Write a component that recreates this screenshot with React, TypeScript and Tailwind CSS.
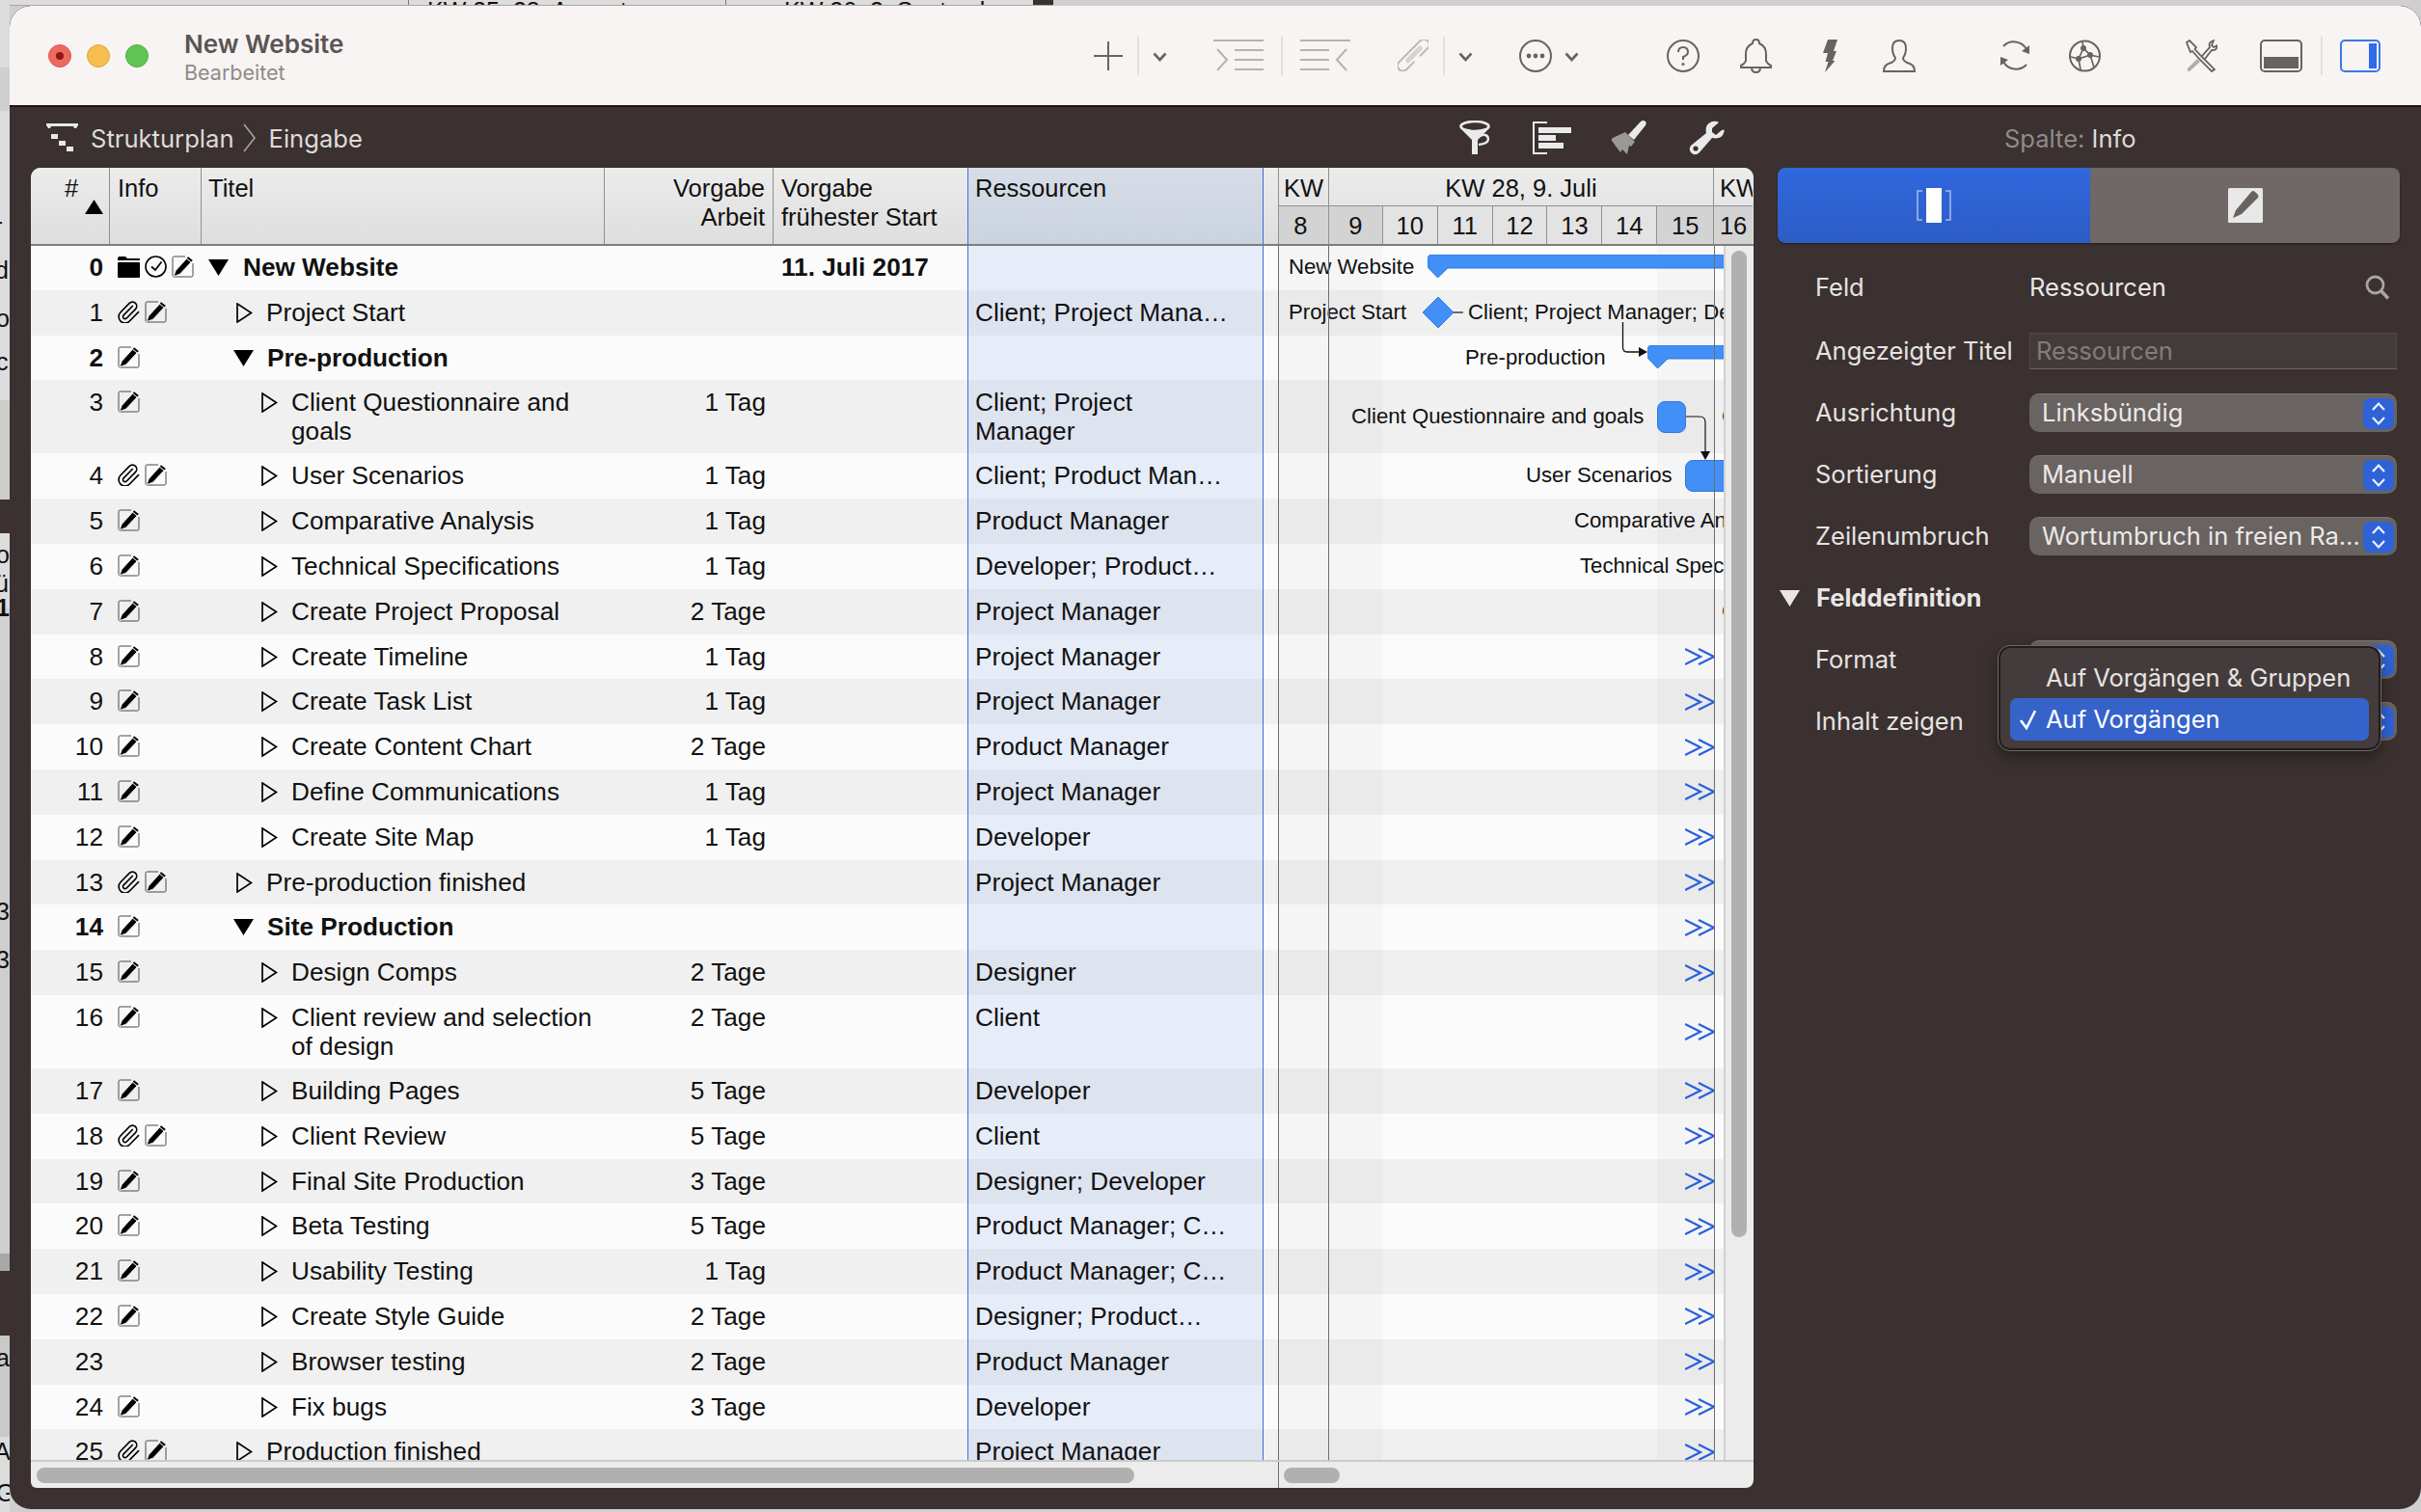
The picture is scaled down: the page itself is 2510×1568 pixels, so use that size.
const SANS = "font-['Liberation_Sans',Arial,sans-serif]";
const UI = "font-['Inter',sans-serif]";

type RowData = {
  n: number;
  icons: string;
  title: string;
  kind: "root" | "group" | "task1" | "task2";
  work?: string;
  start?: string;
  res?: string;
  tall?: boolean;
  more?: boolean;
};

const PM = "Project Manager";
const rows: RowData[] = [
  { n: 0, icons: "fcn", title: "New Website", kind: "root", start: "11. Juli 2017" },
  { n: 1, icons: "pn", title: "Project Start", kind: "task1", res: "Client; Project Mana…" },
  { n: 2, icons: "n", title: "Pre-production", kind: "group" },
  { n: 3, icons: "n", title: "Client Questionnaire and goals", kind: "task2", work: "1 Tag", res: "Client; Project Manager", tall: true },
  { n: 4, icons: "pn", title: "User Scenarios", kind: "task2", work: "1 Tag", res: "Client; Product Man…" },
  { n: 5, icons: "n", title: "Comparative Analysis", kind: "task2", work: "1 Tag", res: "Product Manager" },
  { n: 6, icons: "n", title: "Technical Specifications", kind: "task2", work: "1 Tag", res: "Developer; Product…" },
  { n: 7, icons: "n", title: "Create Project Proposal", kind: "task2", work: "2 Tage", res: PM },
  { n: 8, icons: "n", title: "Create Timeline", kind: "task2", work: "1 Tag", res: PM, more: true },
  { n: 9, icons: "n", title: "Create Task List", kind: "task2", work: "1 Tag", res: PM, more: true },
  { n: 10, icons: "n", title: "Create Content Chart", kind: "task2", work: "2 Tage", res: "Product Manager", more: true },
  { n: 11, icons: "n", title: "Define Communications", kind: "task2", work: "1 Tag", res: PM, more: true },
  { n: 12, icons: "n", title: "Create Site Map", kind: "task2", work: "1 Tag", res: "Developer", more: true },
  { n: 13, icons: "pn", title: "Pre-production finished", kind: "task1", res: PM, more: true },
  { n: 14, icons: "n", title: "Site Production", kind: "group", more: true },
  { n: 15, icons: "n", title: "Design Comps", kind: "task2", work: "2 Tage", res: "Designer", more: true },
  { n: 16, icons: "n", title: "Client review and selection of design", kind: "task2", work: "2 Tage", res: "Client", tall: true, more: true },
  { n: 17, icons: "n", title: "Building Pages", kind: "task2", work: "5 Tage", res: "Developer", more: true },
  { n: 18, icons: "pn", title: "Client Review", kind: "task2", work: "5 Tage", res: "Client", more: true },
  { n: 19, icons: "n", title: "Final Site Production", kind: "task2", work: "3 Tage", res: "Designer; Developer", more: true },
  { n: 20, icons: "n", title: "Beta Testing", kind: "task2", work: "5 Tage", res: "Product Manager; C…", more: true },
  { n: 21, icons: "n", title: "Usability Testing", kind: "task2", work: "1 Tag", res: "Product Manager; C…", more: true },
  { n: 22, icons: "n", title: "Create Style Guide", kind: "task2", work: "2 Tage", res: "Designer; Product…", more: true },
  { n: 23, icons: "", title: "Browser testing", kind: "task2", work: "2 Tage", res: "Product Manager", more: true },
  { n: 24, icons: "n", title: "Fix bugs", kind: "task2", work: "3 Tage", res: "Developer", more: true },
  { n: 25, icons: "pn", title: "Production finished", kind: "task1", res: PM, more: true },
];

const days = [
  { d: 8, cls: "w-[52px] pr-[6px] bg-[#d3d3d3]" },
  { d: 9, cls: "w-[56px] bg-[#d3d3d3]" },
  { d: 10, cls: "w-[57px] bg-[#e3e3e3]" },
  { d: 11, cls: "w-[57px] bg-[#e3e3e3]" },
  { d: 12, cls: "w-[57px] bg-[#e3e3e3]" },
  { d: 13, cls: "w-[57px] bg-[#e3e3e3]" },
  { d: 14, cls: "w-[57px] bg-[#e3e3e3]" },
  { d: 15, cls: "w-[59px] bg-[#d3d3d3]" },
  { d: 16, cls: "w-[40px] bg-[#d3d3d3]" },
];

// info column glyphs
const NoteIcon = () => (
  <svg width="23" height="23" viewBox="0 0 23 23" className="shrink-0">
    <path d="M14 1H2.5Q1 1 1 2.5V20.5Q1 22 2.5 22H20.5Q22 22 22 20.5V8" fill="none" stroke="#333" strokeWidth="0.9" />
    <path d="M2 21.5L4.3 15.5L15.5 3.2L20 7L8.5 19.2Z" fill="#000" stroke="#fbfbfb" strokeWidth="0.8" />
    <path d="M17 1.2L21.8 5L20.4 6.6L15.8 2.8Z" fill="#000" />
  </svg>
);
const ClipIcon = () => (
  <svg width="23" height="23" viewBox="2 1 21 21" className="shrink-0">
    <path d="m16 6-8.414 8.586a2 2 0 0 0 2.829 2.829l8.414-8.586a4 4 0 1 0-5.657-5.657l-8.379 8.551a6 6 0 1 0 8.485 8.485l8.379-8.551" fill="none" stroke="#000" strokeWidth="1.5" strokeLinecap="round" />
  </svg>
);
const FolderIcon = () => (
  <svg width="23" height="23" viewBox="0 0 23 23" className="shrink-0">
    <path d="M0 3Q0 1 2 1H8L10 3H22Q23 3 23 4V5H0Z" fill="#000" />
    <rect x="0" y="7" width="23" height="16" rx="1" fill="#000" />
  </svg>
);
const ClockIcon = () => (
  <svg width="23" height="23" viewBox="0 0 23 23" className="shrink-0">
    <circle cx="11.5" cy="11.5" r="10.5" fill="none" stroke="#000" strokeWidth="1.6" />
    <path d="M7 11.5L11 15L17.5 6.5" fill="none" stroke="#000" strokeWidth="1.8" />
  </svg>
);
const InfoIcons = ({ s }: { s: string }) => (
  <div className="flex gap-[5px] pt-[11px] pl-[8px]">
    {s.split("").map((c, i) =>
      c === "f" ? <FolderIcon key={i} /> : c === "c" ? <ClockIcon key={i} /> : c === "p" ? <ClipIcon key={i} /> : <NoteIcon key={i} />
    )}
  </div>
);

const TriDown = ({ cls, fill = "#000" }: { cls: string; fill?: string }) => (
  <svg width="21" height="17" viewBox="0 0 21 17" className={cls}>
    <path d="M0 0H21L10.5 17Z" fill={fill} />
  </svg>
);
const TriRight = ({ cls }: { cls: string }) => (
  <svg width="17" height="21" viewBox="0 0 17 21" className={cls}>
    <path d="M1 1L15.5 10.5L1 20Z" fill="none" stroke="#000" strokeWidth="1.7" />
  </svg>
);

const More = () => (
  <svg width="31" height="18" viewBox="0 0 31 18" className="absolute left-[422px] top-1/2 -translate-y-1/2">
    <path d="M0 1L16 9L0 17M14 1L30 9L14 17" fill="none" stroke="#2b63e2" strokeWidth="2.2" />
  </svg>
);

const TitleCell = ({ r }: { r: RowData }) => {
  const bold = r.kind === "root" || r.kind === "group";
  return (
    <div className="w-[418px] shrink-0 flex">
      {r.kind === "root" && <TriDown cls="shrink-0 ml-[7px] mr-[15px] mt-[15px]" />}
      {r.kind === "group" && <TriDown cls="shrink-0 ml-[33px] mr-[14px] mt-[15px]" />}
      {r.kind === "task1" && <TriRight cls="shrink-0 ml-[36px] mr-[14px] mt-[13px]" />}
      {r.kind === "task2" && <TriRight cls="shrink-0 ml-[62px] mr-[14px] mt-[13px]" />}
      <div className={`pt-[8px] pr-[8px] ${bold ? "font-bold" : ""}`}>{r.title}</div>
    </div>
  );
};

const TableRow = ({ r, i }: { r: RowData; i: number }) => {
  const odd = i % 2 === 1;
  const bold = r.kind === "root" || r.kind === "group";
  return (
    <div className={`flex shrink-0 text-[26.2px] ${r.tall ? "h-[76px]" : "h-[46.8px]"} ${odd ? "bg-[#f0f0f0]" : "bg-[#fbfbfb]"}`}>
      <div className={`w-[82px] shrink-0 pt-[8px] pr-[7px] text-right ${bold ? "font-bold" : ""}`}>{r.n}</div>
      <div className="w-[95px] shrink-0"><InfoIcons s={r.icons} /></div>
      <TitleCell r={r} />
      <div className="w-[175px] shrink-0 pt-[8px] pr-[8px] text-right">{r.work}</div>
      <div className="w-[201px] shrink-0 pt-[8px] pl-[8px] font-bold">{r.start}</div>
      <div className={`w-[307px] shrink-0 pt-[8px] pl-[7px] pr-[60px] border-x border-[#3f6fd8] ${odd ? "bg-[#dde3ef]" : "bg-[#e6ecf8]"}`}>
        <div className={r.tall ? "" : "whitespace-nowrap"}>{r.res}</div>
      </div>
      <div className="w-[15px] shrink-0" />
      <div className="flex-1 relative">{r.more && <More />}</div>
    </div>
  );
};

// gantt labels and bars, placed on the time axis
const GanttCanvas = () => (
  <div className={`absolute left-[1293px] top-0 w-[462px] h-[1260px] overflow-hidden ${SANS} text-[22.2px] leading-[30px] text-[#111]`}>
    <div className="absolute left-0 top-0 w-[108px] h-full bg-black/[0.025]" />
    <div className="absolute left-[393px] top-0 w-[59px] h-full bg-black/[0.025]" />
    <div className="absolute left-[11px] top-[8px]">New Website</div>
    <svg width="310" height="24" className="absolute left-[155px] top-[10px]">
      <path d="M5 0H310V14H21L10.5 24L1 14Q0 13 0 10V5Q0 0 5 0Z" fill="#418ff7" stroke="#3277dc" strokeWidth="1" />
    </svg>
    <div className="absolute left-[11px] top-[55px]">Project Start</div>
    <svg width="44" height="34" className="absolute left-[149px] top-[53px]">
      <path d="M17 1L33 17L17 33L1 17Z" fill="#418ff7" stroke="#3277dc" strokeWidth="1" />
      <path d="M33 17H43" stroke="#111" strokeWidth="1.2" />
    </svg>
    <div className="absolute left-[197px] top-[55px] whitespace-nowrap">Client; Project Manager; Designer</div>
    <div className="absolute left-[194px] top-[102px]">Pre-production</div>
    <svg width="30" height="38" className="absolute left-[356px] top-[79px]">
      <path d="M1.5 1V27Q1.5 32 6 32H18" fill="none" stroke="#111" strokeWidth="1.3" />
      <path d="M18 27L27 32L18 37Z" fill="#111" />
    </svg>
    <svg width="90" height="24" className="absolute left-[383px] top-[104px]">
      <path d="M5 0H90V14H21L10.5 24L1 14Q0 13 0 10V5Q0 0 5 0Z" fill="#418ff7" stroke="#3277dc" strokeWidth="1" />
    </svg>
    <div className="absolute left-[76px] top-[163px] whitespace-nowrap">Client Questionnaire and goals</div>
    <div className="absolute left-[393px] top-[162px] w-[30px] h-[33px] rounded-[8px] bg-[#418ff7] border border-[#3277dc]" />
    <svg width="28" height="50" className="absolute left-[423px] top-[177px]">
      <path d="M0 1H14Q20 1 20 7V40" fill="none" stroke="#111" strokeWidth="1.2" />
      <path d="M15 37H25L20 46Z" fill="#111" />
    </svg>
    <div className="absolute left-[460px] top-[163px]">C</div>
    <div className="absolute left-[257px] top-[224px] whitespace-nowrap">User Scenarios</div>
    <div className="absolute left-[422px] top-[223px] w-[80px] h-[33px] rounded-[8px] bg-[#418ff7] border border-[#3277dc]" />
    <div className="absolute left-[307px] top-[271px] whitespace-nowrap">Comparative Analysis</div>
    <div className="absolute left-[313px] top-[318px] whitespace-nowrap">Technical Specifications</div>
    <div className="absolute left-[460px] top-[365px]">C</div>
  </div>
);

const HeaderCell = ({ cls, children }: { cls: string; children?: React.ReactNode }) => (
  <div className={`shrink-0 h-full border-r border-[#909090] pt-[6px] ${cls}`}>{children}</div>
);

const TableHeader = () => (
  <div className="relative z-10 flex h-[80px] shrink-0 border-b border-[#7d7d7d] shadow-[0_1px_0_#7d7d7d] bg-gradient-to-b from-[#ececec] to-[#dedede]">
    <HeaderCell cls="w-[82px] relative pl-[35px]">
      #
      <svg width="19" height="15" className="absolute left-[56px] top-[33px]"><path d="M9.5 0L19 15H0Z" fill="#000" /></svg>
    </HeaderCell>
    <HeaderCell cls="w-[95px] pl-[8px]">Info</HeaderCell>
    <HeaderCell cls="w-[418px] pl-[7px]">Titel</HeaderCell>
    <HeaderCell cls="w-[175px] pr-[8px] text-right">Vorgabe<br />Arbeit</HeaderCell>
    <div className="w-[201px] shrink-0 pt-[6px] pl-[8px]">Vorgabe<br />frühester Start</div>
    <div className="w-[307px] shrink-0 pt-[6px] pl-[7px] border-x border-[#3f6fd8] bg-gradient-to-b from-[#d6dde8] to-[#cbd3df]">Ressourcen</div>
    <div className="w-[15px] shrink-0" />
    <div className="flex flex-col w-[492px] shrink-0 border-l border-[#909090] text-center">
      <div className="flex h-[40px] shrink-0 border-b border-[#909090]">
        <div className="w-[52px] border-r border-[#909090] pt-[6px]">KW</div>
        <div className="w-[400px] border-r border-[#909090] pt-[6px]">KW 28, 9. Juli</div>
        <div className="w-[40px] pt-[6px] pl-[6px] overflow-hidden text-left">KW</div>
      </div>
      <div className="flex flex-1">
        {days.map((d) => (
          <div key={d.d} className={`${d.cls} border-r border-[#909090] last:border-r-0 flex items-center justify-center`}>{d.d}</div>
        ))}
      </div>
    </div>
  </div>
);

const GanttTable = () => (
  <div className={`w-[1786px] h-[1369px] shrink-0 flex flex-col rounded-t-[10px] rounded-bl-[6px] rounded-br-[8px] overflow-hidden bg-[#ececec] text-[#111] ${SANS} text-[25.5px] leading-[30px]`}>
    <TableHeader />
    <div className="flex h-[1260px] shrink-0">
      <div className="relative w-[1755px] shrink-0 overflow-hidden flex flex-col">
        {rows.map((r, i) => <TableRow key={r.n} r={r} i={i} />)}
        <GanttCanvas />
        <div className="absolute left-[1293px] top-0 w-px h-full bg-[#6e6e6e]" />
        <div className="absolute left-[1345px] top-0 w-px h-full bg-[#6e6e6e]" />
        <div className="absolute left-[1745px] top-0 w-px h-full bg-[#6e6e6e]" />
      </div>
      <div className="flex-1 border-l-2 border-[#d0d0d0] pt-[6px] pl-[6px]">
        <div className="w-[16px] h-[1023px] rounded-full bg-[#b0b0b0]" />
      </div>
    </div>
    <div className="flex h-[29px] shrink-0 border-t-2 border-[#cbcbcb]">
      <div className="w-[1293px] shrink-0 pt-[6px] pl-[6px]">
        <div className="w-[1138px] h-[16px] rounded-full bg-[#b0b0b0]" />
      </div>
      <div className="flex-1 border-l border-[#6e6e6e] pt-[6px] pl-[5px]">
        <div className="w-[58px] h-[16px] rounded-full bg-[#b0b0b0]" />
      </div>
    </div>
  </div>
);

// toolbar icons
const DK = "#69635f";
const LT = "#b6b2b0";

const Sep = ({ cls }: { cls: string }) => <div className={`w-[2px] h-[40px] bg-[#e3e0de] shrink-0 ${cls}`} />;
const Chev = ({ cls }: { cls: string }) => (
  <svg width="15" height="10" viewBox="0 0 15 10" className={`shrink-0 mt-[3px] ${cls}`}>
    <path d="M1.5 1.5L7.5 8L13.5 1.5" fill="none" stroke={DK} strokeWidth="2.6" />
  </svg>
);

const Toolbar = () => (
  <div className="flex items-center">
    <svg width="30" height="30" className="shrink-0"><path d="M15 0V30M0 15H30" stroke={DK} strokeWidth="2" /></svg>
    <Sep cls="ml-[15px]" />
    <Chev cls="ml-[14px]" />
    <svg width="52" height="34" className="shrink-0 ml-[48px]">
      <path d="M0 1H52M22 11H52M22 21H52M22 31H52" stroke={LT} strokeWidth="2" />
      <path d="M4 10L14 21L4 32" fill="none" stroke={LT} strokeWidth="2" />
    </svg>
    <Sep cls="ml-[18px]" />
    <svg width="52" height="34" className="shrink-0 ml-[18px]">
      <path d="M0 1H52M0 11H30M0 21H30M0 31H30" stroke={LT} strokeWidth="2" />
      <path d="M48 10L38 21L48 32" fill="none" stroke={LT} strokeWidth="2" />
    </svg>
    <svg width="32" height="33" viewBox="0 0 32 33" className="shrink-0 ml-[49px]">
      <g transform="rotate(45 16 16.5)">
        <path d="M21.5 20V31.5A5.5 5.5 0 0 1 10.5 31.5V0.5A5.5 5.5 0 0 1 21.5 0.5V12" fill="none" stroke="#bdb9b7" strokeWidth="2" />
        <path d="M16 6V24" stroke="#d6d3d1" strokeWidth="5" strokeLinecap="round" />
      </g>
    </svg>
    <Sep cls="ml-[15px]" />
    <Chev cls="ml-[14px]" />
    <svg width="34" height="34" className="shrink-0 ml-[48px]">
      <circle cx="17" cy="17" r="16" fill="none" stroke={DK} strokeWidth="2" />
      <circle cx="10" cy="17" r="2.4" fill={DK} /><circle cx="17" cy="17" r="2.4" fill={DK} /><circle cx="24" cy="17" r="2.4" fill={DK} />
    </svg>
    <Chev cls="ml-[13px]" />
    <svg width="34" height="34" className={`shrink-0 ml-[91px]`}>
      <circle cx="17" cy="17" r="16" fill="none" stroke={DK} strokeWidth="2" />
      <path d="M12 13Q12 8 17 8Q22 8 22 13Q22 16 17 18V21" fill="none" stroke={DK} strokeWidth="2" />
      <circle cx="17" cy="25.5" r="1.6" fill={DK} />
    </svg>
    <svg width="33" height="36" className="shrink-0 ml-[42px]">
      <path d="M16.5 1Q20 1 20 5Q27 8 27 16V23Q28 26 32 28V30H1V28Q5 26 6 23V16Q6 8 13 5Q13 1 16.5 1Z" fill="none" stroke={DK} strokeWidth="2" />
      <path d="M12 30Q12 35 16.5 35Q21 35 21 30" fill="none" stroke={DK} strokeWidth="2" />
    </svg>
    <svg width="16" height="34" className="shrink-0 ml-[52px]">
      <path d="M6 0H16L12 12H15L11 22H13.5L3 34L6.5 23H3.5L6 14H1Z" fill={DK} />
    </svg>
    <svg width="34" height="34" className="shrink-0 ml-[47px]">
      <path d="M17 1Q24 1 24 9Q24 15 21 19Q21 23 28 25Q33 27 33 33H1Q1 27 6 25Q13 23 13 19Q10 15 10 9Q10 1 17 1Z" fill="none" stroke={DK} strokeWidth="2" />
    </svg>
    <svg width="34" height="35" className="shrink-0 ml-[86px]">
      <path d="M29 11A15 15 0 0 0 5 8" fill="none" stroke={DK} strokeWidth="2" />
      <path d="M5 24A15 15 0 0 0 29 27" fill="none" stroke={DK} strokeWidth="2" />
      <path d="M32 7V16L24 13Z" fill={DK} />
      <path d="M2 28V19L10 22Z" fill={DK} />
    </svg>
    <svg width="33" height="34" className="shrink-0 ml-[39px]">
      <circle cx="16.5" cy="17" r="15.5" fill="none" stroke={DK} strokeWidth="2" />
      <path d="M15 9L10 20L22 16ZM15 9L14 2M10 20L2 18M10 20L12 31M22 16L31 18M22 16L26 29" fill="none" stroke={DK} strokeWidth="1.7" />
      <circle cx="15" cy="9" r="3" fill={DK} /><circle cx="10" cy="20" r="3" fill={DK} /><circle cx="22" cy="16" r="3" fill={DK} />
    </svg>
    <svg width="34" height="34" className="shrink-0 ml-[87px]">
      <path d="M2 3L5 1L12 8L10.5 10L18 18L31 31L28 33L15 20L8 12L6 13Z" fill="none" stroke={DK} strokeWidth="1.8" />
      <path d="M18 17L26 8Q24 3 30 1L28 6L30 8L34 6Q33 12 28 11L21 20" fill="none" stroke={DK} strokeWidth="1.8" />
      <path d="M13 20L3 30Q2 33 5 33L16 23Z" fill="#b0acaa" />
    </svg>
    <div className="w-[44px] h-[34px] ml-[44px] rounded-[5px] border-2 border-[#69635f] flex flex-col justify-end shrink-0 p-[2px]">
      <div className="h-[12px] bg-[#69635f]" />
    </div>
    <Sep cls="ml-[19px]" />
    <div className="w-[42px] h-[34px] ml-[18px] rounded-[5px] border-2 border-[#3a78ee] flex justify-end shrink-0 p-[2px]">
      <div className="w-[8px] bg-[#2f6bea]" />
    </div>
  </div>
);

const TitleBar = () => (
  <div className="flex items-center h-[105px] shrink-0 bg-[#f7f4f3] border-b-2 border-[#1c1615] pl-[40px] rounded-t-[22px]">
    <div className="w-[24px] h-[24px] rounded-full bg-[#ee6a5f] border border-[#d85a50] flex items-center justify-center">
      <div className="w-[8px] h-[8px] rounded-full bg-[#8c1a10]" />
    </div>
    <div className="w-[24px] h-[24px] ml-[16px] rounded-full bg-[#f5be4f] border border-[#dfa63d]" />
    <div className="w-[24px] h-[24px] ml-[16px] rounded-full bg-[#61c554] border border-[#52ac46]" />
    <div className={`w-[943px] ml-[37px] mt-[4px] shrink-0 ${UI}`}>
      <div className="text-[26px] leading-[30px] font-semibold text-[#5a5552]">New Website</div>
      <div className="text-[21.5px] leading-[26px] text-[#8f8b88] mt-[1px]">Bearbeitet</div>
    </div>
    <Toolbar />
  </div>
);

const SubBar = () => (
  <div className={`flex items-center h-[63px] shrink-0 ${UI} text-[#dedbd9]`}>
    <div className="flex items-center w-[1808px] shrink-0 pl-[38px]">
      <div className="flex items-center w-[1465px] shrink-0">
        <svg width="33" height="29" viewBox="0 0 33 29" className="shrink-0">
          <path d="M0 0H33V2L31 5H29L28 3H5L4 5H2L0 2Z" fill="#e8e8e8" />
          <rect x="5" y="11" width="7" height="5" fill="#e8e8e8" /><rect x="13" y="18" width="7" height="5" fill="#e8e8e8" /><rect x="21" y="24" width="7" height="5" fill="#e8e8e8" />
        </svg>
        <span className="ml-[13px] pt-[2px] text-[25.6px] leading-[30px]">Strukturplan</span>
        <svg width="14" height="30" className="ml-[9px] shrink-0"><path d="M1 1L12 15L1 29" fill="none" stroke="#a9a5a3" strokeWidth="1.6" /></svg>
        <span className="ml-[13px] pt-[2px] text-[25.6px] leading-[30px]">Eingabe</span>
      </div>
      <svg width="33" height="36" viewBox="0 0 33 36" className="shrink-0">
        <ellipse cx="16" cy="6" rx="14.5" ry="5" fill="none" stroke="#eaeaea" strokeWidth="2.6" />
        <path d="M2 9L13 20V35H19V20L30 9Q16 14 2 9Z" fill="#eaeaea" />
        <path d="M19 17Q29 12 30 19Q30 24 20 25" fill="none" stroke="#eaeaea" strokeWidth="2.4" />
      </svg>
      <svg width="41" height="34" viewBox="0 0 41 34" className="ml-[43px] shrink-0">
        <path d="M15 1H1V33H15" fill="none" stroke="#eaeaea" strokeWidth="2" />
        <rect x="6" y="6" width="34" height="6" fill="#eaeaea" /><rect x="6" y="14" width="18" height="6" fill="#eaeaea" /><rect x="6" y="22" width="26" height="6" fill="#eaeaea" />
      </svg>
      <svg width="38" height="37" viewBox="0 0 38 37" className="ml-[40px] shrink-0">
        <path d="M34 1Q38 2 36 6L24 21L18 16L31 2Q32 1 34 1Z" fill="#eaeaea" />
        <path d="M15 13L25 23L21 28L19 27L17 36L12 31L10 34L1 22Q0 20 2 19Z" fill="#9b9896" />
      </svg>
      <svg width="37" height="36" viewBox="0 0 37 36" className="ml-[43px] shrink-0">
        <path d="M24 1Q29 0 31 2L24 8V12L28 15L34 10Q38 8 36 13Q34 20 24 18L11 33Q7 37 3 34Q-1 30 2 26L18 13Q16 4 24 1Z" fill="#eaeaea" />
        <circle cx="7" cy="29" r="2.6" fill="#3a3130" />
      </svg>
    </div>
    <div className="pl-[260px] pt-[2px] text-[25.5px] leading-[30px] whitespace-nowrap">
      <span className="text-[#8f8b89]">Spalte: </span>Info
    </div>
  </div>
);

const Stepper = () => (
  <div className="w-[32px] h-[32px] rounded-[7px] bg-[#2f62d6] shrink-0 flex items-center justify-center">
    <svg width="16" height="26" viewBox="0 0 16 26">
      <path d="M2 9L8 2.5L14 9M2 17L8 23.5L14 17" fill="none" stroke="#eef2fb" strokeWidth="2.2" />
    </svg>
  </div>
);

const Select = ({ value }: { value?: string }) => (
  <div className="w-[381px] h-[40px] rounded-[10px] bg-[#696361] border-t border-[#7a7472] flex items-center justify-between pl-[13px] pr-[3px] shrink-0">
    <span className="whitespace-nowrap text-[#ece9e8] -mt-[2px]">{value}</span>
    <Stepper />
  </div>
);

const Field = ({ label, cls = "mt-[24px]", children }: { label: string; cls?: string; children?: React.ReactNode }) => (
  <div className={`flex items-center h-[40px] ${cls}`}>
    <div className="w-[222px] shrink-0 ml-[39px] whitespace-nowrap text-[#e6e3e1]">{label}</div>
    {children}
  </div>
);

const SidePanel = () => (
  <div className={`relative flex-1 pl-[25px] ${UI} text-[25.5px] leading-[30px]`}>
    <div className="flex w-[645px] h-[78px] rounded-[8px] overflow-hidden shadow-[0_1px_2px_rgba(0,0,0,0.4)]">
      <div className="w-[324px] bg-gradient-to-b from-[#3068de] to-[#2d5cc4] flex items-center justify-center">
        <svg width="36" height="36" viewBox="0 0 36 36">
          <path d="M6 3H1V33H6M30 3H35V33H30" fill="none" stroke="#9db9ee" strokeWidth="1.6" />
          <rect x="10" y="0" width="16" height="36" fill="#fff" />
        </svg>
      </div>
      <div className="flex-1 bg-[#6f6866] flex items-center justify-center">
        <svg width="36" height="36" viewBox="0 0 36 36">
          <rect width="36" height="36" rx="1.5" fill="#e8e8e8" />
          <path d="M5 31L8 23L24 4Q26 2 28 4L31 7Q32 9 31 10L14 27Z" fill="#69635f" />
        </svg>
      </div>
    </div>
    <Field label="Feld" cls="mt-[26px]">
      <span className="text-[#e9e6e5]">Ressourcen</span>
      <svg width="26" height="26" viewBox="0 0 26 26" className="ml-[206px]">
        <circle cx="10.5" cy="10.5" r="8.5" fill="none" stroke="#a9a5a3" strokeWidth="2.8" />
        <path d="M16.5 16.5L24 24.5" stroke="#a9a5a3" strokeWidth="3.6" />
      </svg>
    </Field>
    <Field label="Angezeigter Titel" cls="mt-[26px]">
      <div className="w-[381px] h-[38px] bg-[#433b3a] border border-[#4f4847] border-b-[#6a6462] pl-[6px] flex items-center text-[#827c7a]">Ressourcen</div>
    </Field>
    <Field label="Ausrichtung"><Select value="Linksbündig" /></Field>
    <Field label="Sortierung"><Select value="Manuell" /></Field>
    <Field label="Zeilenumbruch"><Select value="Wortumbruch in freien Ra…" /></Field>
    <div className="flex items-center h-[40px] mt-[24px] font-bold text-[#e9e6e5]">
      <TriDown cls="shrink-0 ml-[2px] mr-[17px]" fill="#e9e6e5" />
      Felddefinition
    </div>
    <Field label="Format"><Select /></Field>
    <Field label="Inhalt zeigen"><Select /></Field>

    <div className="absolute left-[254px] top-[496px] w-[396px] h-[108px] rounded-[12px] bg-[#443c3c] border-2 border-[#211b1a] outline outline-1 outline-[#6e6866] shadow-[0_6px_16px_rgba(0,0,0,0.4)] pt-[11px] px-[10px] text-[#e6e3e1]">
      <div className="h-[40px] pl-[37px] flex items-center whitespace-nowrap">Auf Vorgängen &amp; Gruppen</div>
      <div className="h-[44px] mt-[1px] rounded-[7px] bg-[#3563ca] flex items-center text-white">
        <svg width="20" height="22" viewBox="0 0 20 22" className="ml-[9px] mr-[8px] shrink-0">
          <path d="M2 12L8 20L17 2" fill="none" stroke="#fff" strokeWidth="2.6" />
        </svg>
        Auf Vorgängen
      </div>
    </div>
  </div>
);

// bits of the window that lies behind this one
const Behind = () => (
  <>
    <div className={`absolute left-0 top-0 w-[1092px] h-[6px] overflow-hidden border-b border-[#a9a6a4] bg-[#dcdcdc] ${SANS} text-[25px] text-[#111]`}>
      <div className="absolute left-[423px] top-0 w-px h-full bg-[#777]" />
      <div className="absolute left-[752px] top-0 w-px h-full bg-[#777]" />
      <div className="absolute left-[443px] -top-[4px] leading-[30px] whitespace-nowrap">KW 35, 28. August</div>
      <div className="absolute left-[813px] -top-[4px] leading-[30px] whitespace-nowrap">KW 36, 3. September</div>
      <div className="absolute left-[1071px] top-0 w-[21px] h-full bg-[#3a3130]" />
    </div>
    <div className={`absolute left-0 top-0 w-[10px] h-[1568px] overflow-hidden bg-[#dcdcdc] ${SANS} text-[25px] leading-[30px] text-[#111]`}>
      <div className="absolute top-[70px] w-full h-[45px] bg-[#cfcfcf]" />
      <div className="absolute top-[415px] w-full h-[103px] bg-[#cfcdcc]" />
      <div className="absolute top-[518px] w-full h-[35px] bg-[#3a3130]" />
      <div className="absolute top-[630px] w-full h-[75px] bg-[#d2d2d2]" />
      <div className="absolute top-[705px] w-full h-[595px] bg-[#cfcfcf]" />
      <div className="absolute top-[1300px] w-full h-[18px] bg-[#a8a8a8]" />
      <div className="absolute top-[1318px] w-full h-[67px] bg-[#3a3130]" />
      <div className="absolute top-[1385px] w-full h-[105px] bg-[#c9c9c9]" />
      <div className="absolute -left-[6px] top-[220px]">r</div>
      <div className="absolute -left-[5px] top-[265px]">d</div>
      <div className="absolute -left-[4px] top-[315px]">o</div>
      <div className="absolute -left-[4px] top-[360px]">c</div>
      <div className="absolute -left-[4px] top-[560px]">o</div>
      <div className="absolute -left-[5px] top-[590px]">ü</div>
      <div className="absolute -left-[4px] top-[615px] font-bold">1</div>
      <div className="absolute -left-[4px] top-[930px]">3</div>
      <div className="absolute -left-[4px] top-[980px]">3</div>
      <div className="absolute -left-[4px] top-[1393px]">a</div>
      <div className="absolute -left-[6px] top-[1490px]">A</div>
      <div className="absolute -left-[4px] top-[1533px]">G</div>
    </div>
  </>
);

export default function App() {
  return (
    <div className="relative w-[2510px] h-[1568px] overflow-hidden bg-[#cfcfcf]">
      <Behind />
      <div className="absolute left-[10px] top-[6px] right-0 h-[1559px] flex flex-col rounded-t-[22px] rounded-b-[22px] bg-[#3a3130] overflow-hidden">
        <TitleBar />
        <SubBar />
        <div className="flex flex-1 pl-[22px]">
          <GanttTable />
          <SidePanel />
        </div>
      </div>
    </div>
  );
}
